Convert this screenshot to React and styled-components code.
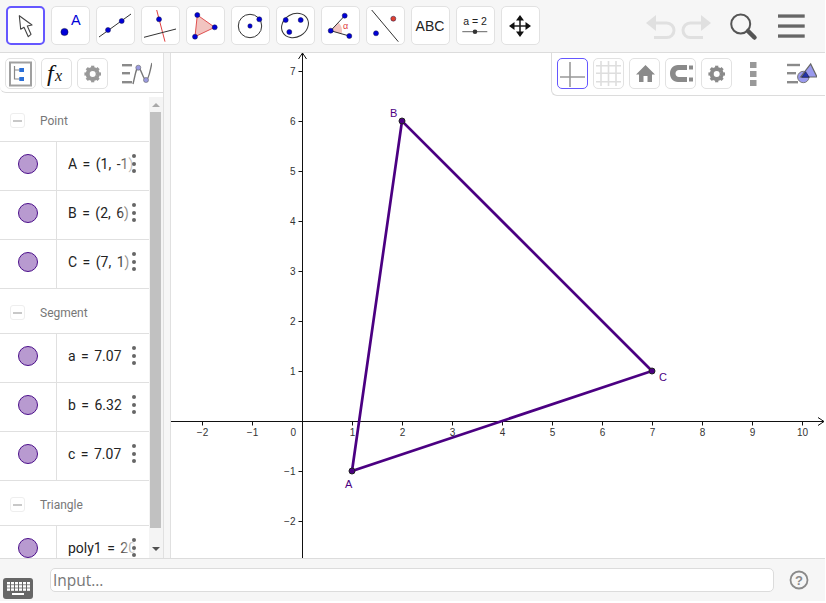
import React from "react";
import styled, { createGlobalStyle } from "styled-components";

const GlobalStyle = createGlobalStyle`
    html, body {
        margin: 0;
        padding: 0;
        background: white;
        font-family: "Liberation Sans", Arial, sans-serif;
    }
`;

const AppFrame = styled.div`
    position: relative;
    display: flex;
    flex-direction: column;
    width: 825px;
    height: 601px;
    overflow: hidden;
    background: white;
`;

const Toolbar = styled.div`
    display: flex;
    align-items: flex-start;
    gap: 6px;
    height: 53px;
    box-sizing: border-box;
    padding: 6px 0 0 6px;
    background: #f6f6f6;
    border-bottom: 1px solid #dcdcdc;
    flex-shrink: 0;
`;

const ToolButton = styled.div`
    width: 39px;
    height: 39px;
    box-sizing: border-box;
    background: white;
    border-radius: 5px;
    border: ${(p) => (p.$active ? "2px solid #6557ff" : "1px solid #e2e2e2")};
    display: flex;
    align-items: center;
    justify-content: center;
    flex-shrink: 0;

    svg {
        display: block;
        flex-shrink: 0;
    }
`;

const ToolbarRight = styled.div`
    margin-left: auto;
    display: flex;
    align-items: center;
    height: 39px;
    padding-right: 20px;
`;

const Main = styled.div`
    flex: 1;
    display: flex;
    min-height: 0;
`;

const Sidebar = styled.div`
    width: 163px;
    display: flex;
    flex-direction: column;
    flex-shrink: 0;
    background: white;
`;

const SideStyleBar = styled.div`
    display: flex;
    gap: 5px;
    height: 40px;
    box-sizing: border-box;
    padding: 5px 0 0 5px;
    background: white;
    border-bottom: 1px solid #dcdcdc;
    border-bottom-left-radius: 6px;
    flex-shrink: 0;
`;

const StyleButton = styled.div`
    width: 31px;
    height: 31px;
    box-sizing: border-box;
    border-radius: 5px;
    border: ${(p) => (p.$active ? "1px solid #6557ff" : p.$plain ? "1px solid transparent" : "1px solid #e2e2e2")};
    background: white;
    display: flex;
    align-items: center;
    justify-content: center;
    flex-shrink: 0;
    margin-left: ${(p) => p.$shift || 0}px;

    svg {
        display: block;
        flex-shrink: 0;
    }
`;

const ListArea = styled.div`
    flex: 1;
    display: flex;
    min-height: 0;
    padding-top: 4px;
`;

const AlgebraList = styled.div`
    width: 149px;
    overflow: hidden;
    flex-shrink: 0;
`;

const GroupHeader = styled.div`
    display: flex;
    align-items: center;
    gap: 15px;
    height: 45px;
    box-sizing: border-box;
    padding-left: 10px;
    padding-top: 3px;
    border-bottom: 1px solid #e0e0e0;
    color: #777;
    font-family: "Roboto", "Liberation Sans", sans-serif;
    font-size: 12px;
`;

const Collapse = styled.div`
    width: 15px;
    height: 15px;
    box-sizing: border-box;
    border: 1px solid #eeeeee;
    border-radius: 3px;
    display: flex;
    align-items: center;
    justify-content: center;

    &::after {
        content: "";
        width: 9px;
        height: 2px;
        background: #c8c8c8;
    }
`;

const Row = styled.div`
    position: relative;
    display: flex;
    height: 49px;
    box-sizing: border-box;
    border-bottom: 1px solid #e0e0e0;
`;

const MarbleCell = styled.div`
    width: 57px;
    box-sizing: border-box;
    padding-bottom: 4px;
    border-right: 1px solid #e0e0e0;
    display: flex;
    align-items: center;
    justify-content: center;
    flex-shrink: 0;
`;

const Marble = styled.div`
    width: 20px;
    height: 20px;
    box-sizing: border-box;
    border-radius: 50%;
    background: #b89ad0;
    border: 1px solid #4b0f8a;
`;

const Formula = styled.div`
    position: relative;
    width: 68px;
    margin-left: 11px;
    padding-bottom: 4px;
    display: flex;
    align-items: center;
    overflow: hidden;
    white-space: nowrap;
    color: #222;
    font-family: "Roboto", "Liberation Sans", sans-serif;
    font-size: 14px;
    word-spacing: 2px;

    &::after {
        content: "";
        position: absolute;
        top: 0;
        right: 0;
        bottom: 0;
        width: 18px;
        background: linear-gradient(to right, rgba(255, 255, 255, 0), white);
    }
`;

const MoreDots = styled.div`
    position: absolute;
    left: 132px;
    top: 12px;
    display: flex;
    flex-direction: column;
    gap: 3.6px;

    span {
        width: 4px;
        height: 4px;
        border-radius: 50%;
        background: #666;
    }
`;

const ScrollBar = styled.div`
    position: relative;
    width: 14px;
    background: #f4f4f4;
    flex-shrink: 0;
`;

const ScrollThumb = styled.div`
    position: absolute;
    left: 1px;
    right: 2px;
    top: 15px;
    height: 416px;
    background: #c1c1c1;
`;

const ScrollArrow = styled.div`
    position: absolute;
    left: 3px;
    width: 0;
    height: 0;
    border-left: 4px solid transparent;
    border-right: 4px solid transparent;
    ${(p) => (p.$down ? "bottom: 7px; border-top: 4px solid #505050;" : "top: 6px; border-bottom: 4px solid #a8a8a8;")}
`;

const Divider = styled.div`
    width: 8px;
    box-sizing: border-box;
    background: #f6f6f6;
    border-left: 1px solid #e0e0e0;
    border-right: 1px solid #e0e0e0;
    flex-shrink: 0;
`;

const Canvas = styled.div`
    position: relative;
    flex: 1;
    min-width: 0;
    background: white;

    svg {
        display: block;
    }
`;

const GraphStyleBar = styled.div`
    position: absolute;
    top: 0;
    right: 0;
    display: flex;
    align-items: flex-start;
    gap: 5px;
    width: 274px;
    height: 43px;
    box-sizing: border-box;
    padding: 5px 0 0 5px;
    background: white;
    border-left: 1px solid #dcdcdc;
    border-bottom: 1px solid #dcdcdc;
    border-bottom-left-radius: 6px;
`;

const BottomBar = styled.div`
    display: flex;
    align-items: center;
    height: 43px;
    box-sizing: border-box;
    padding: 0 16px 0 3px;
    background: #f6f6f6;
    border-top: 1px solid #dcdcdc;
    flex-shrink: 0;
`;

const KeyboardButton = styled.div`
    width: 31px;
    height: 22px;
    margin-top: 17px;
    margin-right: 16px;
    flex-shrink: 0;

    svg {
        display: block;
    }
`;

const InputField = styled.div`
    flex: 1;
    height: 24px;
    box-sizing: border-box;
    padding-left: 2px;
    border: 1px solid #dcdcdc;
    border-radius: 5px;
    background: white;
    color: #777;
    font-family: "Open Sans", "Liberation Sans", sans-serif;
    font-size: 15.5px;
    line-height: 22px;
`;

const HelpButton = styled.div`
    width: 20px;
    height: 20px;
    margin-left: 15px;
    flex-shrink: 0;

    svg {
        display: block;
    }
`;

const BLUE = "#0000d8";
const PURPLE = "#4b0082";
const SANS = "Liberation Sans, sans-serif";

const Dot = ({ x, y, r = 2.5, fill = BLUE }) => (
    <circle cx={x} cy={y} r={r} fill={fill} stroke="#1a1a4a" strokeWidth="0.5" />
);

const Icon = ({ children }) => (
    <svg width="39" height="39" viewBox="0 0 39 39">
        {children}
    </svg>
);

const toolIcons = [
    <Icon key="move">
        <path d="M13.3 9.7 L14.7 23.3 L18 21.3 L22.3 30.7 L25 28.3 L21.3 20 L26 19 Z" fill="white" stroke="#444" strokeWidth="1.1" strokeLinejoin="round" />
    </Icon>,
    <Icon key="point">
        <circle cx="13.5" cy="26" r="3.6" fill={BLUE} stroke="#113" strokeWidth="0.5" />
        <text x="20" y="19" fontSize="14.5" fill={BLUE} fontFamily={SANS}>A</text>
    </Icon>,
    <Icon key="line">
        <line x1="3" y1="31" x2="35" y2="8" stroke="#333" strokeWidth="1" />
        <Dot x={12} y={24} />
        <Dot x={25.7} y={15} />
    </Icon>,
    <Icon key="perp">
        <line x1="15.7" y1="4" x2="24" y2="35.7" stroke="#e04040" strokeWidth="1" />
        <line x1="3" y1="31.3" x2="35" y2="23" stroke="#333" strokeWidth="1" />
        <Dot x={18} y={13.3} />
    </Icon>,
    <Icon key="poly">
        <polygon points="11.3,9 28.7,21.3 9,30.7" fill="#f2c4c0" stroke="#e05050" strokeWidth="1" />
        <Dot x={11.3} y={9} />
        <Dot x={28.7} y={21.3} />
        <Dot x={9} y={30.7} />
    </Icon>,
    <Icon key="circle">
        <circle cx="19" cy="20" r="11.7" fill="none" stroke="#333" strokeWidth="1" />
        <Dot x={19} y={20} r={2.2} />
        <Dot x={28.3} y={13.3} />
    </Icon>,
    <Icon key="ellipse">
        <ellipse cx="19" cy="19.5" rx="14" ry="11.5" transform="rotate(-30 19 19.5)" fill="none" stroke="#333" strokeWidth="1" />
        <Dot x={9.7} y={14} />
        <Dot x={24.7} y={14} />
        <Dot x={13.3} y={26} />
    </Icon>,
    <Icon key="angle">
        <path d="M9.7 24.7 L17.5 16.5 A12 12 0 0 1 20.5 28.2 Z" fill="#f2c4c0" />
        <path d="M23.7 9.7 L9.7 24.7 L28.3 30" fill="none" stroke="#333" strokeWidth="1" />
        <Dot x={23.7} y={9.7} />
        <Dot x={9.7} y={24.7} />
        <Dot x={28.3} y={30} />
        <text x="22" y="23" fontSize="9" fill="#e04040" fontFamily={SANS}>α</text>
    </Icon>,
    <Icon key="reflect">
        <line x1="5.7" y1="4" x2="32.3" y2="35.7" stroke="#333" strokeWidth="1" />
        <Dot x={10} y={27.3} />
        <Dot x={27.3} y={12.7} fill="#e04030" />
    </Icon>,
    <Icon key="text">
        <text x="19" y="25" fontSize="14" textAnchor="middle" fill="#222" fontFamily={SANS}>ABC</text>
    </Icon>,
    <Icon key="slider">
        <text x="19" y="18.5" fontSize="10.5" textAnchor="middle" fill="#222" fontFamily={SANS}>a = 2</text>
        <line x1="6.3" y1="25.7" x2="31.3" y2="25.7" stroke="#666" strokeWidth="1" />
        <circle cx="19" cy="25.7" r="2.3" fill="#333" />
    </Icon>,
    <Icon key="hand">
        <path d="M19 13 V27 M12 20 H26" stroke="#222" strokeWidth="1.6" />
        <path d="M19 9 L23 14.5 H15 Z M19 31 L23 25.5 H15 Z M8 20 L13.5 16 V24 Z M30 20 L24.5 16 V24 Z" fill="#111" />
    </Icon>,
];

const StyleIcon = ({ children }) => (
    <svg width="31" height="31" viewBox="0 0 31 31">
        {children}
    </svg>
);

const Gear = ({ cx, cy, color = "#8a8a8a" }) => (
    <g transform={`translate(${cx} ${cy})`}>
        <circle r="5.5" fill="none" stroke={color} strokeWidth="3" />
        {[0, 45, 90, 135].map((a) => (
            <rect key={a} x="-1.6" y="-8.3" width="3.2" height="16.6" fill={color} transform={`rotate(${a})`} />
        ))}
        <circle r="3" fill="white" />
    </g>
);

const groups = [
    { title: "Point", rows: ["A = (1, -1)", "B = (2, 6)", "C = (7, 1)"] },
    { title: "Segment", rows: ["a = 7.07", "b = 6.32", "c = 7.07"] },
    { title: "Triangle", rows: ["poly1 = 20"] },
];

const A = [352, 418];
const B = [402, 68];
const C = [652, 318];
const ox = 302.5;
const oy = 368.5;

const toCanvas = (x) => x - 171;
const xTicks = [-2, -1, 1, 2, 3, 4, 5, 6, 7, 8, 9, 10];
const yTicks = [7, 6, 5, 4, 3, 2, 1, -1, -2];

const fmt = (n) => (n < 0 ? `\u2212${-n}` : `${n}`);

const Graph = () => (
    <svg width="654" height="505" viewBox="0 0 654 505">
        <line x1="0" y1={oy} x2="653" y2={oy} stroke="#111" strokeWidth="1" />
        <path d={`M647 ${oy - 4} L653 ${oy} L647 ${oy + 4}`} fill="none" stroke="#111" strokeWidth="1" />
        <line x1={toCanvas(ox)} y1="0" x2={toCanvas(ox)} y2="505" stroke="#111" strokeWidth="1" />
        <path d={`M${toCanvas(ox) - 4} 6 L${toCanvas(ox)} 0 L${toCanvas(ox) + 4} 6`} fill="none" stroke="#111" strokeWidth="1" />
        {xTicks.map((n) => (
            <g key={n}>
                <line x1={toCanvas(ox) + n * 50} y1={oy} x2={toCanvas(ox) + n * 50} y2={oy + 4} stroke="#111" strokeWidth="1" />
                <text x={toCanvas(ox) + n * 50} y={oy + 14} fontSize="10" textAnchor="middle" fill="#333" fontFamily={SANS}>{fmt(n)}</text>
            </g>
        ))}
        {yTicks.map((n) => (
            <g key={n}>
                <line x1={toCanvas(ox) - 4} y1={oy - n * 50} x2={toCanvas(ox)} y2={oy - n * 50} stroke="#111" strokeWidth="1" />
                <text x={toCanvas(ox) - 7} y={oy - n * 50 + 3.5} fontSize="10" textAnchor="end" fill="#333" fontFamily={SANS}>{fmt(n)}</text>
            </g>
        ))}
        <text x={toCanvas(ox) - 12} y={oy + 14} fontSize="10" fill="#333" fontFamily={SANS}>0</text>
        <polygon
            points={[A, B, C].map((p) => `${toCanvas(p[0])},${p[1]}`).join(" ")}
            fill="none"
            stroke={PURPLE}
            strokeWidth="2.7"
        />
        {[A, B, C].map((p) => (
            <circle key={p[0]} cx={toCanvas(p[0])} cy={p[1]} r="3" fill={PURPLE} stroke="#222" strokeWidth="1" />
        ))}
        <text x={toCanvas(345)} y="435" fontSize="11" fill={PURPLE} fontFamily={SANS}>A</text>
        <text x={toCanvas(390)} y="64" fontSize="11" fill={PURPLE} fontFamily={SANS}>B</text>
        <text x={toCanvas(659)} y="328" fontSize="11" fill={PURPLE} fontFamily={SANS}>C</text>
    </svg>
);

const App = () => (
    <AppFrame>
        <GlobalStyle />
        <Toolbar>
            {toolIcons.map((icon, i) => (
                <ToolButton key={i} $active={i === 0}>{icon}</ToolButton>
            ))}
            <ToolbarRight>
                <svg width="159" height="39" viewBox="0 0 159 39">
                    <path d="M5 17 H20.7 A7.3 7.3 0 0 1 20.7 31.6 H8" fill="none" stroke="#e0e0e0" strokeWidth="3" />
                    <path d="M0 17 L10 9 V25 Z" fill="#e0e0e0" />
                    <path d="M60 17 H44.3 A7.3 7.3 0 0 0 44.3 31.6 H57" fill="none" stroke="#e0e0e0" strokeWidth="3" />
                    <path d="M65 17 L55 9 V25 Z" fill="#e0e0e0" />
                    <circle cx="94.7" cy="18" r="9.5" fill="none" stroke="#555" strokeWidth="2" />
                    <line x1="102" y1="25" x2="108.5" y2="31.5" stroke="#555" strokeWidth="4.5" strokeLinecap="round" />
                    <rect x="132" y="8.4" width="26.7" height="3.3" fill="#666" />
                    <rect x="132" y="18.4" width="26.7" height="3.3" fill="#666" />
                    <rect x="132" y="28.4" width="26.7" height="3.3" fill="#666" />
                </svg>
            </ToolbarRight>
        </Toolbar>
        <Main>
            <Sidebar>
                <SideStyleBar>
                    <StyleButton>
                        <StyleIcon>
                            <rect x="5" y="4.5" width="21" height="23" fill="none" stroke="#a0a0a0" strokeWidth="2" />
                            <path d="M9.5 8 V21 H15 M9.5 12 H15" fill="none" stroke="#888" strokeWidth="1.2" />
                            <rect x="14.3" y="10" width="4.7" height="4" fill="#2a6fd8" />
                            <rect x="14.3" y="19" width="4.7" height="4" fill="#2a6fd8" />
                        </StyleIcon>
                    </StyleButton>
                    <StyleButton>
                        <StyleIcon>
                            <text x="6" y="23" fontSize="24" fontStyle="italic" fill="#111" fontFamily="Liberation Serif, serif">f</text>
                            <text x="14" y="23" fontSize="16" fontStyle="italic" fill="#111" fontFamily="Liberation Serif, serif">x</text>
                        </StyleIcon>
                    </StyleButton>
                    <StyleButton>
                        <StyleIcon>
                            <Gear cx={15.7} cy={16} color="#999" />
                        </StyleIcon>
                    </StyleButton>
                    <StyleButton $plain $shift={8}>
                        <StyleIcon>
                            <rect x="1" y="6" width="10" height="2.4" fill="#8a8a8a" />
                            <rect x="1" y="14" width="8" height="2.4" fill="#8a8a8a" />
                            <rect x="1" y="23" width="10" height="2.4" fill="#8a8a8a" />
                            <path d="M12 26 C15 14 15 10 17.3 9.7 C20 9.5 22 22 25 22 C28 22 29 12 31 5" fill="none" stroke="#777" strokeWidth="1.4" />
                            <circle cx="17.3" cy="9.7" r="2.5" fill="#9a9ae0" stroke="#666" strokeWidth="0.6" />
                            <circle cx="25" cy="22" r="2.5" fill="#9a9ae0" stroke="#666" strokeWidth="0.6" />
                        </StyleIcon>
                    </StyleButton>
                </SideStyleBar>
                <ListArea>
                    <AlgebraList>
                        {groups.map((g) => (
                            <div key={g.title}>
                                <GroupHeader>
                                    <Collapse />
                                    {g.title}
                                </GroupHeader>
                                {g.rows.map((r) => (
                                    <Row key={r}>
                                        <MarbleCell><Marble /></MarbleCell>
                                        <Formula>{r}</Formula>
                                        <MoreDots><span /><span /><span /></MoreDots>
                                    </Row>
                                ))}
                            </div>
                        ))}
                    </AlgebraList>
                    <ScrollBar>
                        <ScrollArrow />
                        <ScrollThumb />
                        <ScrollArrow $down />
                    </ScrollBar>
                </ListArea>
            </Sidebar>
            <Divider />
            <Canvas>
                <Graph />
                <GraphStyleBar>
                    <StyleButton $active>
                        <StyleIcon>
                            <path d="M13 4 V29 M3 19 H28" stroke="#999" strokeWidth="1.6" />
                        </StyleIcon>
                    </StyleButton>
                    <StyleButton>
                        <StyleIcon>
                            <path d="M8 3 V28 M15.5 3 V28 M23 3 V28 M3 7.7 H28 M3 15.3 H28 M3 23.7 H28" stroke="#dedede" strokeWidth="1.6" />
                        </StyleIcon>
                    </StyleButton>
                    <StyleButton>
                        <StyleIcon>
                            <path d="M16.5 7 L26 16.5 H23 V24 H18.5 V18 H14.5 V24 H10 V16.5 H7 Z" fill="#8a8a8a" />
                        </StyleIcon>
                    </StyleButton>
                    <StyleButton>
                        <StyleIcon>
                            <path d="M22 7 H13 C8 7 5 11 5 15.5 C5 20 8 24 13 24 H22 V19 H14 C12 19 10.5 17.5 10.5 15.5 C10.5 13.5 12 12 14 12 H22 Z" fill="#8a8a8a" />
                            <rect x="24" y="7.5" width="4" height="4" fill="#8a8a8a" />
                            <rect x="24" y="19.5" width="4" height="4" fill="#8a8a8a" />
                        </StyleIcon>
                    </StyleButton>
                    <StyleButton>
                        <StyleIcon>
                            <Gear cx={15.7} cy={16} />
                        </StyleIcon>
                    </StyleButton>
                    <StyleButton $plain>
                        <StyleIcon>
                            <rect x="13" y="4" width="6.5" height="6" fill="#999" />
                            <rect x="13" y="13" width="6.5" height="6" fill="#999" />
                            <rect x="13" y="22" width="6.5" height="6" fill="#999" />
                        </StyleIcon>
                    </StyleButton>
                    <StyleButton $plain $shift={13}>
                        <StyleIcon>
                            <rect x="1" y="5.8" width="13" height="2.4" fill="#8a8a8a" />
                            <rect x="1" y="14" width="9" height="2.4" fill="#8a8a8a" />
                            <rect x="1" y="23" width="11" height="2.4" fill="#8a8a8a" />
                            <circle cx="17.3" cy="19" r="5.7" fill="#9a9aee" stroke="#777" strokeWidth="1" />
                            <path d="M24.7 6 L31 19 H14.7 Z" fill="#9a9aee" stroke="#666" strokeWidth="1.2" />
                            <path d="M19.7 13.7 L23.3 19.3 H15.7 Z" fill="#2233aa" stroke="#112" strokeWidth="0.5" />
                        </StyleIcon>
                    </StyleButton>
                </GraphStyleBar>
            </Canvas>
        </Main>
        <BottomBar>
            <KeyboardButton>
                <svg width="30" height="22" viewBox="0 0 30 22">
                    <rect x="0" y="0" width="30" height="21" rx="3" fill="#666" />
                    {[0, 1, 2].map((r) =>
                        [0, 1, 2, 3, 4, 5].map((c) => (
                            <rect key={`${r}-${c}`} x={4 + c * 4} y={4 + r * 3.2} width="3" height="2.4" fill="white" />
                        ))
                    )}
                    <rect x="9" y="15" width="12" height="2" fill="white" />
                </svg>
            </KeyboardButton>
            <InputField>Input…</InputField>
            <HelpButton>
                <svg width="20" height="20" viewBox="0 0 20 20">
                    <circle cx="10" cy="10" r="8.5" fill="none" stroke="#8a8a8a" strokeWidth="1.8" />
                    <text x="10" y="14.5" fontSize="13" fontWeight="bold" textAnchor="middle" fill="#8a8a8a" fontFamily={SANS}>?</text>
                </svg>
            </HelpButton>
        </BottomBar>
    </AppFrame>
);

export default App;
